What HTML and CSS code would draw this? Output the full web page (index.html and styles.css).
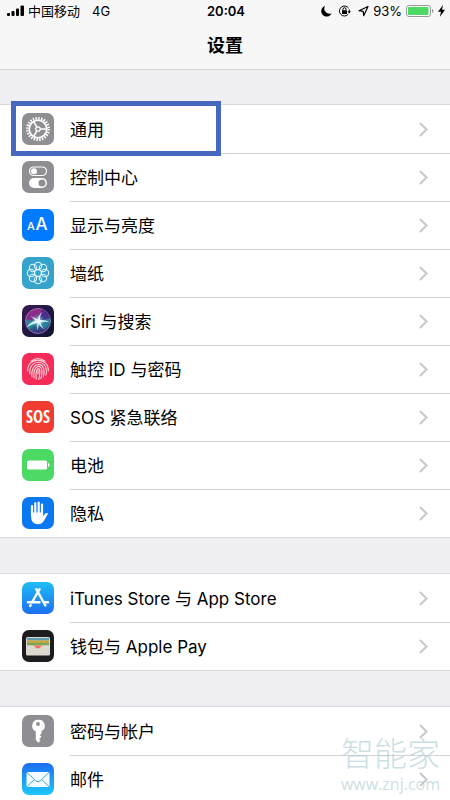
FILE: index.html
```html
<!DOCTYPE html>
<html lang="zh-CN">
<head>
    <meta charset="UTF-8">
    <meta name="viewport" content="width=device-width, initial-scale=1.0">
    <title>设置</title>
    <link rel="stylesheet" href="styles.css">
</head>
<body>
    <header class="top">
        <div class="status-bar">
            <div class="status-left">
                <svg width="17" height="12" viewBox="0 0 17 12">
                    <rect x="0" y="8" width="3" height="3" rx="1"/>
                    <rect x="4.500" y="6" width="3" height="5" rx="1"/>
                    <rect x="9" y="3.500" width="3" height="7.500" rx="1"/>
                    <rect x="13.500" y="0.500" width="3.500" height="10.500" rx="1"/>
                </svg>
                <span>中国移动</span>
                <span class="network">4G</span>
            </div>
            <div class="time">20:04</div>
            <div class="status-right">
                <svg class="moon" width="11" height="12" viewBox="0 0 11 12"><path d="M4 1A5.400 5.400 0 1 0 10.600 8.300A5.200 5.200 0 0 1 4 1z"/></svg>
                <svg class="lock" width="13" height="12" viewBox="0 0 13 12">
                    <path d="M10.600 3.200A5 5 0 1 0 10.200 9.300M11.300 4.500V7" fill="none" stroke="#000" stroke-width="1"/>
                    <path d="M9.300 6.200h3.600L11.200 8.500z"/>
                    <rect x="4" y="5.300" width="5" height="3.700" rx=".5"/>
                    <path d="M5 5.500V4.200a1.500 1.500 0 0 1 3 0v1.300" fill="none" stroke="#000" stroke-width="1"/>
                </svg>
                <svg width="11" height="12" viewBox="0 0 11 12"><path d="M10 1.500L1 5.700l4.200.6.500 4.400z" fill="none" stroke="#000" stroke-width="1.200" stroke-linejoin="round"/></svg>
                <span>93%</span>
                <svg width="28" height="12" viewBox="0 0 28 12">
                    <rect x=".5" y=".5" width="24" height="11" rx="2.500" fill="#fff" stroke="#999"/>
                    <rect x="2" y="2" width="20.500" height="8" rx="1" fill="#4cd964"/>
                    <path d="M26 4v4q1.500-.5 1.500-2T26 4z" fill="#999"/>
                </svg>
                <svg width="7" height="12" viewBox="0 0 7 12"><path d="M5 0L0 6.700h3L1.800 12 7 4.800H4z"/></svg>
            </div>
        </div>
        <h1>设置</h1>
    </header>

    <main>
        <nav class="group">
            <a href="#general" class="row highlight">
                <svg class="icon" viewBox="0 0 32 32">
                    <rect width="32" height="32" rx="7" fill="#8e8e93"/>
                    <g fill="none" stroke="#fff">
                        <circle cx="16" cy="16" r="10.800" stroke-width="2.400" stroke-dasharray="1.500 1.327"/>
                        <circle cx="16" cy="16" r="8.800" stroke-width="1.800"/>
                        <circle cx="16" cy="16" r="2.200" stroke-width="1.300"/>
                        <path d="M18.200 16h6M14.900 14.100l-3-5.200M14.900 17.900l-3 5.200" stroke-width="1.600"/>
                    </g>
                </svg>
                <span class="label">通用</span>
                <svg class="chevron" viewBox="0 0 9 15"><path d="M1 1l6.500 6.500L1 14"/></svg>
            </a>
            <a href="#control-center" class="row">
                <svg class="icon" viewBox="0 0 32 32">
                    <rect width="32" height="32" rx="7" fill="#8e8e93"/>
                    <rect x="7.500" y="6" width="17" height="8.500" rx="4.250" fill="none" stroke="#fff" stroke-width="1.200"/>
                    <circle cx="12" cy="10.250" r="3" fill="#fff"/>
                    <rect x="7" y="17" width="18" height="10" rx="5" fill="#fff"/>
                    <circle cx="20" cy="22" r="3.500" fill="#8e8e93"/>
                </svg>
                <span class="label">控制中心</span>
                <svg class="chevron" viewBox="0 0 9 15"><path d="M1 1l6.500 6.500L1 14"/></svg>
            </a>
            <a href="#display" class="row">
                <svg class="icon" viewBox="0 0 32 32">
                    <rect width="32" height="32" rx="7" fill="#007aff"/>
                    <text x="5" y="21" class="icon-text letter" font-size="11">A</text>
                    <text x="13.500" y="21" class="icon-text letter" font-size="17">A</text>
                </svg>
                <span class="label">显示与亮度</span>
                <svg class="chevron" viewBox="0 0 9 15"><path d="M1 1l6.500 6.500L1 14"/></svg>
            </a>
            <a href="#wallpaper" class="row">
                <svg class="icon" viewBox="0 0 32 32">
                    <rect width="32" height="32" rx="7" fill="#36a3cc"/>
                    <g fill="none" stroke="#e4f8ff" stroke-width="1.100">
                        <circle cx="16" cy="9" r="3.700"/>
                        <circle cx="21" cy="11" r="3.700"/>
                        <circle cx="23" cy="16" r="3.700"/>
                        <circle cx="21" cy="21" r="3.700"/>
                        <circle cx="16" cy="23" r="3.700"/>
                        <circle cx="11" cy="21" r="3.700"/>
                        <circle cx="9" cy="16" r="3.700"/>
                        <circle cx="11" cy="11" r="3.700"/>
                        <circle cx="16" cy="16" r="3.500"/>
                    </g>
                </svg>
                <span class="label">墙纸</span>
                <svg class="chevron" viewBox="0 0 9 15"><path d="M1 1l6.500 6.500L1 14"/></svg>
            </a>
            <a href="#siri" class="row">
                <svg class="icon" viewBox="0 0 32 32">
                    <defs>
                        <linearGradient id="siriBg" x1="0" y1="0" x2="1" y2="1">
                            <stop offset="0" stop-color="#3a1a55"/>
                            <stop offset="1" stop-color="#0b1430"/>
                        </linearGradient>
                        <linearGradient id="siriOrb" x1="0.200" y1="0" x2="0.500" y2="1">
                            <stop offset="0" stop-color="#a5268c"/>
                            <stop offset="0.400" stop-color="#7a2f86"/>
                            <stop offset="0.650" stop-color="#24708c"/>
                            <stop offset="1" stop-color="#3a2c78"/>
                        </linearGradient>
                        <radialGradient id="siriGlow">
                            <stop offset="0" stop-color="#fff"/>
                            <stop offset="0.350" stop-color="#bff4f5" stop-opacity="0.600"/>
                            <stop offset="1" stop-color="#40c8d8" stop-opacity="0"/>
                        </radialGradient>
                    </defs>
                    <rect width="32" height="32" rx="7" fill="url(#siriBg)"/>
                    <circle cx="16" cy="16" r="12.500" fill="url(#siriOrb)" stroke="#a785bd" stroke-width="0.800"/>
                    <path d="M16 16L20 4q7 2 8 9z" fill="#40308c" opacity="0.800"/>
                    <path d="M16 16l11-2q1 6-4 10z" fill="#2790a8" opacity="0.700"/>
                    <path d="M15 16L4 15q0 5 4 9z" fill="#1fa0a5" opacity="0.700"/>
                    <circle cx="16" cy="16" r="7" fill="url(#siriGlow)"/>
                    <path d="M8 11q5 1.500 7.500 3.500Q17 9 20 7q-2.500 4-2 8 5.500-.5 9.500 2-5-.8-9 .8 1 4 4 6.700-4-2-5.500-5.500-1 3-1.200 6.500-1.300-4-.3-7.500-5 .5-11 4.500 3-5 9-7-2-2.500-5.500-4.500z" fill="#effcff" opacity="0.850"/>
                </svg>
                <span class="label">Siri 与搜索</span>
                <svg class="chevron" viewBox="0 0 9 15"><path d="M1 1l6.500 6.500L1 14"/></svg>
            </a>
            <a href="#touch-id" class="row">
                <svg class="icon" viewBox="0 0 32 32">
                    <rect width="32" height="32" rx="7" fill="#f42c57"/>
                    <g fill="none" stroke="#ffd6de" stroke-width="1.100" stroke-linecap="round">
                        <path d="M9 8.200Q16 2.800 23 8.200"/>
                        <path d="M5.800 18C4.500 3.500 27.500 3.500 26.200 18"/>
                        <path d="M7.800 21C6.500 5.500 25.500 5.500 24.300 19.500q-.1 1.500-.5 2.500"/>
                        <path d="M9.900 23.500C8.500 8 23.500 8 22 20q-.2 2-.8 4"/>
                        <path d="M12 25C10.800 10.500 21 10.500 19.900 20q-.2 3-1 5.500"/>
                        <path d="M14.200 26C13.300 13 18.500 13 17.800 20q-.2 4-1.200 6.500"/>
                        <path d="M16 17v4"/>
                    </g>
                </svg>
                <span class="label">触控 ID 与密码</span>
                <svg class="chevron" viewBox="0 0 9 15"><path d="M1 1l6.500 6.500L1 14"/></svg>
            </a>
            <a href="#sos" class="row">
                <svg class="icon" viewBox="0 0 32 32">
                    <rect width="32" height="32" rx="7" fill="#f03c31"/>
                    <text x="16" y="22" class="icon-text sos" text-anchor="middle" font-size="17">SOS</text>
                </svg>
                <span class="label">SOS 紧急联络</span>
                <svg class="chevron" viewBox="0 0 9 15"><path d="M1 1l6.500 6.500L1 14"/></svg>
            </a>
            <a href="#battery" class="row">
                <svg class="icon" viewBox="0 0 32 32">
                    <rect width="32" height="32" rx="7" fill="#4cd964"/>
                    <rect x="5" y="11.500" width="20" height="9" rx="1.500" fill="#fff"/>
                    <path d="M26 14v4q1.500-.5 1.500-2T26 14z" fill="#fff"/>
                </svg>
                <span class="label">电池</span>
                <svg class="chevron" viewBox="0 0 9 15"><path d="M1 1l6.500 6.500L1 14"/></svg>
            </a>
            <a href="#privacy" class="row">
                <svg class="icon" viewBox="0 0 32 32">
                    <rect width="32" height="32" rx="7" fill="#0a78f0"/>
                    <g fill="none" stroke="#fff" stroke-width="2.200" stroke-linecap="round">
                        <path d="M10 9v9M13.300 6.300V17M16.700 5.500V17M20 7.500V18"/>
                    </g>
                    <path d="M8.900 15.500h12.200v3.700l2.200-2.600q1-1 2.200-.5.700.3.200 1.200l-3.500 6Q20.300 27.200 16 27.200q-5.500 0-6.700-5.200z" fill="#fff"/>
                </svg>
                <span class="label">隐私</span>
                <svg class="chevron" viewBox="0 0 9 15"><path d="M1 1l6.500 6.500L1 14"/></svg>
            </a>
        </nav>

        <nav class="group">
            <a href="#store" class="row">
                <svg class="icon" viewBox="0 0 32 32">
                    <defs>
                        <linearGradient id="storeBg" x1="0" y1="0" x2="0" y2="1">
                            <stop offset="0" stop-color="#1fbdf5"/>
                            <stop offset="1" stop-color="#1c6ff0"/>
                        </linearGradient>
                    </defs>
                    <rect width="32" height="32" rx="7" fill="url(#storeBg)"/>
                    <g fill="none" stroke="#fff" stroke-width="2.400" stroke-linecap="round">
                        <path d="M14.300 7.200L23.300 23.500M17.600 7.200L10.200 20M8.700 23l-.5 1"/>
                        <path d="M6 20.200h11.500M22.500 20.200H26"/>
                    </g>
                </svg>
                <span class="label">iTunes Store 与 App Store</span>
                <svg class="chevron" viewBox="0 0 9 15"><path d="M1 1l6.500 6.500L1 14"/></svg>
            </a>
            <a href="#wallet" class="row">
                <svg class="icon" viewBox="0 0 32 32">
                    <rect width="32" height="32" rx="7" fill="#1d1c1e"/>
                    <rect x="4" y="7" width="24" height="18.500" rx="1.500" fill="#dcd9cf"/>
                    <path d="M5 8h22v2.500H5z" fill="#5a9eb0"/>
                    <path d="M5 10.500h22V13H5z" fill="#c5a53c"/>
                    <path d="M5 13h22v2.500H5z" fill="#77a65a"/>
                    <path d="M4.500 15.500h23V25h-23z" fill="#dcd9cf"/>
                    <path d="M10.500 15.500h11q-1.500 0-2.200 1-3.300 4-6.600 0-.7-1-2.200-1z" fill="#ef7058"/>
                </svg>
                <span class="label">钱包与 Apple Pay</span>
                <svg class="chevron" viewBox="0 0 9 15"><path d="M1 1l6.500 6.500L1 14"/></svg>
            </a>
        </nav>

        <nav class="group">
            <a href="#accounts" class="row">
                <svg class="icon" viewBox="0 0 32 32">
                    <rect width="32" height="32" rx="7" fill="#8e8e93"/>
                    <path d="M16 4.800a6 6 0 0 0-2.200 11.500V25l2.500 2.800 2.200-2.300-1.300-1.500 2.300-2.200-1.700-1.800 1.700-1.500v-2.400A6 6 0 0 0 16 4.800z" fill="#fff"/>
                    <circle cx="16" cy="9" r="1.900" fill="#8e8e93"/>
                </svg>
                <span class="label">密码与帐户</span>
                <svg class="chevron" viewBox="0 0 9 15"><path d="M1 1l6.500 6.500L1 14"/></svg>
            </a>
            <a href="#mail" class="row">
                <svg class="icon" viewBox="0 0 32 32">
                    <defs>
                        <linearGradient id="mailBg" x1="0" y1="0" x2="0" y2="1">
                            <stop offset="0" stop-color="#1d6df0"/>
                            <stop offset="1" stop-color="#1cc8fa"/>
                        </linearGradient>
                    </defs>
                    <rect width="32" height="32" rx="7" fill="url(#mailBg)"/>
                    <rect x="4.500" y="9" width="23" height="15" rx="1.500" fill="#f2fbff"/>
                    <path d="M5 9.500l9 8.500q2 1.600 4 0l9-8.500M5 23.500l7.500-7M27 23.500l-7.500-7" fill="none" stroke="#55a5c8" stroke-width="1"/>
                </svg>
                <span class="label">邮件</span>
                <svg class="chevron" viewBox="0 0 9 15"><path d="M1 1l6.500 6.500L1 14"/></svg>
            </a>
            <div class="watermark">
                <span class="watermark-name">智能家</span>
                <span class="watermark-url">www.znj.com</span>
            </div>
        </nav>
    </main>
</body>
</html>
```
FILE: styles.css
```css
body {
    margin: 0;
    background: #efeff4;
    color: #000;
    font-family: Inter, "Noto Sans CJK SC", sans-serif;
}

/* Status bar and title */
.top {
    background: #f7f7f7;
    border-bottom: 1px solid #d0d0d3;
}

.status-bar {
    display: grid;
    grid-template-columns: 1fr auto 1fr;
    align-items: center;
    height: 22px;
    padding: 0 5px 0 7px;
    font-size: 13px;
    line-height: 22px;
}

.status-left,
.status-right {
    display: flex;
    align-items: center;
    gap: 4px;
}

.status-right {
    justify-content: flex-end;
}

.network {
    margin-left: 8px;
}

.time {
    font-weight: 600;
}

.moon {
    margin-right: 2px;
}

.lock {
    margin-right: 3px;
}

h1 {
    margin: 0;
    padding: 12px 0 11px;
    font-size: 18px;
    line-height: 24px;
    font-weight: 600;
    text-align: center;
}

/* Setting groups */
main {
    display: flex;
    flex-direction: column;
    gap: 37px;
    padding-top: 35px;
}

.group {
    position: relative;
    background: #fff;
    box-shadow: 0 -1px #d9d9dd, 0 1px #d9d9dd;
}

.row {
    position: relative;
    display: flex;
    align-items: center;
    gap: 16px;
    height: 48px;
    padding: 0 22px;
    color: #000;
    text-decoration: none;
    font-size: 17px;
}

/* Divider starts at the label */
.row + .row::before {
    content: "";
    position: absolute;
    top: 0;
    left: 70px;
    right: 0;
    height: 1px;
    background: #d3d3d6;
}

.highlight::after {
    content: "";
    position: absolute;
    z-index: 1;
    top: -4px;
    left: 11px;
    width: 200px;
    height: 45px;
    border: 5px solid #4668bf;
}

.icon {
    flex: none;
    width: 32px;
    height: 32px;
}

.icon-text {
    fill: #fff;
    font-family: Inter, sans-serif;
}

.letter {
    font-weight: 500;
}

.sos {
    font-family: "Liberation Sans Narrow", "Open Sans Condensed", "DejaVu Sans Condensed", sans-serif;
    font-weight: 700;
}

.label {
    flex: 1;
    padding-top: 2px;
    line-height: 24px;
}

.chevron {
    width: 9px;
    height: 15px;
    fill: none;
    stroke: #c7c7cc;
    stroke-width: 2;
}

.watermark {
    position: absolute;
    right: 10px;
    bottom: 7px;
    display: flex;
    flex-direction: column;
    align-items: center;
    color: #a9cdd0;
    opacity: 0.6;
    pointer-events: none;
}

.watermark-name {
    font-size: 33px;
    line-height: 36px;
    font-weight: 300;
}

.watermark-url {
    font-family: "Open Sans", sans-serif;
    font-size: 16px;
    line-height: 24px;
}
```
